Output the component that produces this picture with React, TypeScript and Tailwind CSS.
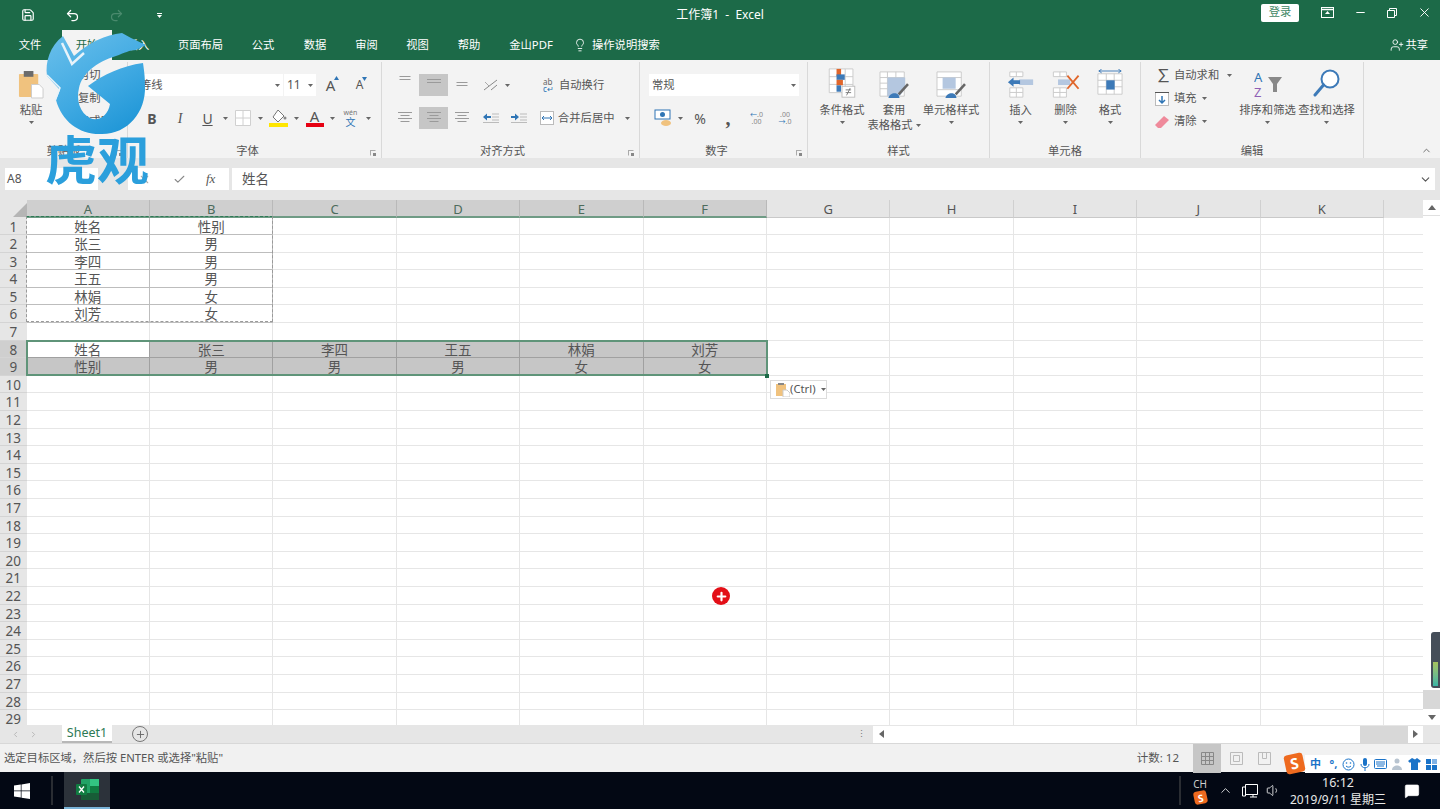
import type { ReactNode } from "react";
import {
  Save, Undo2, Redo2, Minus, X, Check, ChevronDown, ChevronUp, ChevronRight, ChevronLeft,
  Lightbulb, UserPlus, Plus, Volume1, MessageSquare,
} from "lucide-react";

const COLS = ["A", "B", "C", "D", "E", "F", "G", "H", "I", "J", "K"];
const NAMES = ["姓名", "张三", "李四", "王五", "林娟", "刘芳"];
const SEX = ["性别", "男", "男", "男", "女", "女"];
const ROWS = Array.from({ length: 29 }, (_, i) => i + 1);

function Caret({ className = "" }: { className?: string }) {
  return (
    <svg width="5" height="3" viewBox="0 0 5 3" className={className}>
      <path d="M0 0h5L2.500 3z" fill="#666" />
    </svg>
  );
}

function Lines({ rows }: { rows: number[] }) {
  return (
    <svg width="20" height="16" viewBox="0 0 20 16">
      {rows.map((w, i) => (
        <rect key={i} x={(20 - w) / 2} y={2 + i * 3} width={w} height="1" fill="#9a9a9a" />
      ))}
    </svg>
  );
}

function Group({ label, width, labelClass = "", children, launcher }: { label: string; width: string; labelClass?: string; children: ReactNode; launcher?: boolean }) {
  return (
    <div className={`${width} relative flex shrink-0 flex-col border-r border-[#d9d9d9]`}>
      <div className="min-h-0 flex-1">{children}</div>
      <div className={`${labelClass} h-[16px] text-center text-[11.3px] leading-[18px] text-[#555]`}>{label}</div>
      {launcher && (
        <svg width="6" height="6" viewBox="0 0 6 6" className="absolute right-[5px] bottom-[2px]">
          <path d="M0 .5h5.500M.500 0v5.500" stroke="#aaa" fill="none" />
          <rect x="3" y="3" width="3" height="3" fill="#888" />
        </svg>
      )}
    </div>
  );
}

function BigButton({ width, label, second, icon }: { width: string; label: string; second?: string; icon: ReactNode }) {
  return (
    <div className={`${width} flex shrink-0 flex-col items-center text-[11.3px] leading-[15px] text-[#555]`}>
      <div className="flex h-[37px] items-end justify-center">{icon}</div>
      <div className="mt-[3px] whitespace-nowrap">{label}</div>
      {second ? (
        <div className="whitespace-nowrap">{second}<Caret className="ml-[3px] inline" /></div>
      ) : (
        <Caret className="mt-[4px]" />
      )}
    </div>
  );
}

function PasteIcon() {
  return (
    <svg width="26" height="29" viewBox="0 0 27 30">
      <rect x="1" y="4" width="20" height="24" rx="1" fill="#f0c27e" />
      <rect x="6" y="1" width="10" height="6" fill="#6b6b6b" />
      <path d="M14 15h8l4 4v10H14z" fill="#fff" stroke="#ccc" />
    </svg>
  );
}

function FontA({ size, up }: { size: number; up: boolean }) {
  return (
    <div className="relative text-[#555]" style={{ fontSize: size, lineHeight: 1 }}>
      A
      <svg width="5" height="4" viewBox="0 0 5 4" className="absolute -top-[2px] -right-[4px]">
        <path d={up ? "M0 4h5L2.500 0z" : "M0 0h5L2.500 4z"} fill="#2f75b5" />
      </svg>
    </div>
  );
}

function Sogou({ size, text }: { size: string; text: string }) {
  return (
    <div className={`${size} flex rotate-[-12deg] items-center justify-center rounded-[3px] bg-[#ee6a1f] font-bold text-white`}>
      {text}
    </div>
  );
}

function Logo() {
  return (
    <div className="pointer-events-none absolute top-[30px] left-[44px] flex w-[106px] flex-col items-center">
      <svg width="106" height="108" viewBox="44 30 106 108">
        <defs>
          <linearGradient id="swirl" x1="0.2" y1="0" x2="0.8" y2="1">
            <stop offset="0" stopColor="#66bdea" />
            <stop offset="0.55" stopColor="#3fa9e2" />
            <stop offset="1" stopColor="#1d95d6" />
          </linearGradient>
        </defs>
        <path
          d="M63 36C50 46 45 62 47 76L60 90L56 100C62 122 80 135 102 134C128 134 146 112 145 86C145 76 144 70 143 63C122 66 104 74 88 86L110 104C108 116 98 122 90 118C80 113 76 100 79 88C82 74 96 62 116 56C124 53 130 50 136 50L146 45L131 38L122 33C105 35 90 42 74 56Z"
          fill="url(#swirl)"
        />
        <path d="M62 43L72 64L84 53" stroke="#e8f3fa" strokeWidth="2.500" fill="none" />
        <path d="M47 75L60 88L55 101" stroke="#e8f3fa" strokeWidth="1.500" fill="none" />
      </svg>
      <div className="-mt-[4px] text-[52px] leading-[52px] font-bold whitespace-nowrap text-[#2b9fdc]">虎观</div>
    </div>
  );
}

function Ribbon() {
  return (
    <div className="flex h-[98px] bg-[#f3f3f3] pt-[2px]">
      <Group label="剪贴板" width="w-[128px]" launcher>
        <div className="flex">
          <BigButton width="w-[62px]" label="粘贴" icon={<PasteIcon />} />
          <div className="ml-[16px] flex flex-col gap-[7px] pt-[5px] text-[11.3px] leading-[16px] text-[#555]">
            <span>剪切</span>
            <span>复制</span>
            <span>格式刷</span>
          </div>
        </div>
      </Group>

      <Group label="字体" labelClass="pr-[14px]" width="w-[254px]" launcher>
        <div className="flex h-[44px] items-center pt-[2px] pl-[2px]">
          <div className="flex h-[22px] w-[153px] items-center justify-between bg-white pr-[3px] pl-[10px] text-[11.3px] text-[#555]">
            等线<Caret />
          </div>
          <div className="ml-[1px] flex h-[22px] w-[32px] items-center justify-between bg-white px-[3px] text-[12px] text-[#555]">
            11<Caret />
          </div>
          <div className="flex w-[29px] justify-center"><FontA size={15} up /></div>
          <div className="flex w-[29px] justify-center"><FontA size={12} up={false} /></div>
        </div>
        <div className="mt-[1px] flex h-[22px] items-center pl-[10px] text-[14px] text-[#555]">
          <div className="w-[28px] text-center font-bold">B</div>
          <div className="w-[28px] text-center font-['Liberation_Serif',serif] italic">I</div>
          <div className="w-[27px] text-center underline">U</div>
          <div className="flex w-[8px] justify-center"><Caret /></div>
          <div className="flex w-[28px] justify-center">
            <svg width="16" height="16" viewBox="0 0 16 16"><path d="M.5.500h15v15H.5zM8 0v16M0 8h16" stroke="#d0d0d0" fill="#fff" /></svg>
          </div>
          <div className="flex w-[7px] justify-center"><Caret /></div>
          <div className="flex w-[29px] justify-center">
            <svg width="19" height="18" viewBox="0 0 19 18">
              <path d="M9 1l6 6-6 6-5-5z" fill="#fff" stroke="#777" />
              <circle cx="16" cy="9" r="1.500" fill="#888" />
              <rect y="14" width="19" height="4" fill="#ffe600" />
            </svg>
          </div>
          <div className="flex w-[7px] justify-center"><Caret /></div>
          <div className="flex w-[29px] flex-col items-center leading-[13px]">
            <span className="text-[15px]">A</span>
            <span className="h-[4px] w-[18px] bg-[#e60012]" />
          </div>
          <div className="flex w-[7px] justify-center"><Caret /></div>
          <div className="flex w-[29px] flex-col items-center text-[7px] leading-[8px] text-[#777]">
            <span>wén</span>
            <span className="text-[10px] leading-[10px] text-[#2f75b5]">文</span>
          </div>
          <div className="flex w-[7px] justify-center"><Caret /></div>
        </div>
      </Group>

      <Group label="对齐方式" labelClass="pr-[16px]" width="w-[258px]" launcher>
        <div className="flex h-[44px] items-center pt-[2px] pl-[9px] text-[11.3px] text-[#555]">
          <div className="flex h-[22px] w-[28px] items-start justify-center"><Lines rows={[11, 11]} /></div>
          <div className="flex h-[22px] w-[29px] items-center justify-center bg-[#c6c6c6]"><Lines rows={[14, 14]} /></div>
          <div className="flex h-[22px] w-[28px] items-end justify-center"><Lines rows={[11, 11]} /></div>
          <div className="flex w-[29px] justify-center">
            <svg width="15" height="14" viewBox="0 0 15 14"><path d="M1 12L14 2M8 12l6-5" stroke="#888" fill="none" /><path d="M2 4l4 4" stroke="#aaa" /></svg>
          </div>
          <Caret />
          <div className="ml-[33px] flex items-center gap-[2px]">
            <div className="w-[14px] text-[8px] leading-[7px] text-[#666]">ab<br /><span className="text-[#2f75b5]">c↵</span></div>
            <span>自动换行</span>
          </div>
        </div>
        <div className="mt-[1px] flex h-[22px] items-center pl-[9px] text-[11.3px] text-[#555]">
          <div className="flex w-[28px] justify-center"><Lines rows={[14, 9, 14, 9]} /></div>
          <div className="flex h-[22px] w-[29px] items-center justify-center bg-[#c6c6c6]"><Lines rows={[14, 9, 14, 9]} /></div>
          <div className="flex w-[28px] justify-center"><Lines rows={[14, 9, 14, 9]} /></div>
          <div className="flex w-[29px] justify-center">
            <svg width="16" height="12" viewBox="0 0 16 12"><path d="M9 2h7M9 5h7M9 8h7M0 10.500h16" stroke="#bbb" /><path d="M0 5l4-3.500V4h4v2H4v2.500z" fill="#2f75b5" /></svg>
          </div>
          <div className="flex w-[28px] justify-center">
            <svg width="16" height="12" viewBox="0 0 16 12"><path d="M9 2h7M9 5h7M9 8h7M0 10.500h16" stroke="#bbb" /><path d="M8 5L4 1.500V4H0v2h4v2.500z" fill="#2f75b5" /></svg>
          </div>
          <div className="ml-[7px] flex items-center gap-[4px]">
            <svg width="14" height="14" viewBox="0 0 14 14"><rect x=".5" y=".5" width="13" height="13" fill="#fff" stroke="#bbb" /><path d="M2 7h10M2 7l2-2M2 7l2 2M12 7l-2-2M12 7l-2 2" stroke="#2f75b5" fill="none" /></svg>
            <span>合并后居中</span>
            <Caret className="ml-[6px]" />
          </div>
        </div>
      </Group>

      <Group label="数字" labelClass="pr-[14px]" width="w-[168px]" launcher>
        <div className="flex h-[44px] items-center pt-[2px] pl-[9px]">
          <div className="flex h-[22px] w-[150px] items-center justify-between bg-white pr-[3px] pl-[3px] text-[11.3px] text-[#555]">
            常规<Caret />
          </div>
        </div>
        <div className="mt-[1px] flex h-[22px] items-center pl-[9px] text-[#555]">
          <div className="flex w-[28px] justify-center">
            <svg width="18" height="18" viewBox="0 0 18 18">
              <rect x="1" y="1" width="15" height="9" fill="#fff" stroke="#2f75b5" />
              <circle cx="8.500" cy="5.500" r="2.500" fill="#2f75b5" />
              <ellipse cx="12" cy="14" rx="5" ry="3" fill="#f0c27e" />
            </svg>
          </div>
          <div className="flex w-[6px] justify-center"><Caret /></div>
          <div className="w-[33px] pl-[1px] text-center text-[14px]">%</div>
          <div className="w-[24px] text-center font-['Liberation_Serif',serif] text-[20px] leading-[14px] font-bold">,</div>
          <div className="flex w-[33px] flex-col items-center text-[7px] leading-[7px] text-[#888]">
            <span><span className="text-[#2f75b5]">←</span>.0</span><span>.00</span>
          </div>
          <div className="flex w-[24px] flex-col items-center text-[7px] leading-[7px] text-[#888]">
            <span>.00</span><span><span className="text-[#2f75b5]">→</span>.0</span>
          </div>
        </div>
      </Group>

      <Group label="样式" width="w-[182px]">
        <div className="flex pl-[7px]">
          <BigButton width="w-[54px]" label="条件格式" icon={
            <svg width="28" height="31" viewBox="0 0 30 34">
              <path d="M1 1h26v26H1zM1 9.500h26M1 18h26M18.500 1v26" stroke="#c9c9c9" fill="#fff" />
              <rect x="9" y="1" width="5" height="8" fill="#e0662b" /><rect x="9" y="7" width="9" height="6" fill="#3d7ab8" />
              <rect x="9" y="13" width="7" height="6" fill="#e0662b" /><rect x="9" y="19" width="5" height="7" fill="#3d7ab8" />
              <rect x="15" y="20" width="14" height="12" fill="#fff" stroke="#bbb" />
              <path d="M19 24h6M19 27h6M24 22l-4 8" stroke="#777" />
            </svg>
          } />
          <BigButton width="w-[50px]" label="套用" second="表格格式" icon={
            <svg width="30" height="28" viewBox="0 0 32 30">
              <path d="M1 1h26v26H1zM1 7h26M1 13h26M1 19h26M9 1v26M18 1v26" stroke="#c9c9c9" fill="#fff" />
              <path d="M9 7h19v12l-6 8H9z" fill="#b4c7e0" /><path d="M20 24l10-11 2 2-10 11z" fill="#666" />
              <path d="M10 29c1-5 8-7 11-3l1 3z" fill="#3d7ab8" />
            </svg>
          } />
          <BigButton width="w-[64px]" label="单元格样式" icon={
            <svg width="30" height="28" viewBox="0 0 32 30">
              <path d="M1 1h26v26H1zM1 7h26M1 20h26" stroke="#c9c9c9" fill="#fff" />
              <rect x="7" y="7" width="14" height="12" fill="#b4c7e0" /><path d="M20 24l10-11 2 2-10 11z" fill="#666" />
              <path d="M10 29c1-5 8-7 11-3l1 3z" fill="#3d7ab8" />
            </svg>
          } />
        </div>
      </Group>

      <Group label="单元格" width="w-[151px]">
        <div className="flex pl-[8px]">
          <BigButton width="w-[45px]" label="插入" icon={
            <svg width="28" height="28" viewBox="0 0 28 30">
              <path d="M2 1h14v5H2zM9 1v5M2 18h14v10H2zM2 23h14M9 18v10" stroke="#c9c9c9" fill="#fff" />
              <rect x="12" y="9" width="15" height="6" fill="#b4c7e0" /><path d="M0 12l6-5v3h7v4H6v3z" fill="#3d7ab8" />
            </svg>
          } />
          <BigButton width="w-[45px]" label="删除" icon={
            <svg width="29" height="28" viewBox="0 0 30 30">
              <path d="M2 1h14v5H2zM9 1v5M2 18h14v10H2zM2 23h14M9 18v10" stroke="#c9c9c9" fill="#fff" />
              <rect x="7" y="9" width="13" height="6" fill="#b4c7e0" /><path d="M17 5l12 14M29 5L17 19" stroke="#e0662b" strokeWidth="2" />
            </svg>
          } />
          <BigButton width="w-[44px]" label="格式" icon={
            <svg width="26" height="30" viewBox="0 0 28 32">
              <path d="M1 5h26v22H1zM1 12h26M1 19h26M10 5v22M18.500 5v22" stroke="#c9c9c9" fill="#fff" />
              <path d="M2 2h24M2 2l3-2M2 2l3 2M26 2l-3-2M26 2l-3 2" stroke="#3d7ab8" fill="none" />
              <rect x="10" y="12" width="9" height="10" fill="#3d7ab8" />
            </svg>
          } />
        </div>
      </Group>

      <Group label="编辑" width="w-[223px]">
        <div className="flex pl-[14px]">
          <div className="flex w-[83px] flex-col pt-[2px] text-[11.3px] text-[#555]">
            <div className="flex h-[23px] items-center gap-[5px]">
              <span className="w-[14px] text-center text-[17px] leading-none">∑</span>自动求和<Caret className="ml-[3px]" />
            </div>
            <div className="flex h-[23px] items-center gap-[5px]">
              <svg width="14" height="14" viewBox="0 0 14 14"><rect x=".5" y=".5" width="13" height="13" fill="#fff" stroke="#bbb" /><path d="M0 .5h14" stroke="#555" /><path d="M7 4v7M4 8l3 3 3-3" stroke="#2f75b5" strokeWidth="1.500" fill="none" /></svg>
              填充<Caret />
            </div>
            <div className="flex h-[23px] items-center gap-[5px]">
              <svg width="14" height="12" viewBox="0 0 14 12"><path d="M9 0l5 4-8 8H3L0 9z" fill="#ef8a9b" /></svg>
              清除<Caret />
            </div>
          </div>
          <BigButton width="w-[59px]" label="排序和筛选" icon={
            <svg width="28" height="30" viewBox="0 0 28 30">
              <text x="0" y="13" fontSize="13" fill="#2f75b5">A</text>
              <text x="0" y="28" fontSize="13" fill="#8e5fb5">Z</text>
              <path d="M14 8h14l-5 7v8h-4v-8z" fill="#888" />
            </svg>
          } />
          <BigButton width="w-[59px]" label="查找和选择" icon={
            <svg width="28" height="30" viewBox="0 0 28 30">
              <circle cx="17" cy="10" r="8.500" fill="#fff" stroke="#3d7ab8" strokeWidth="2" />
              <path d="M10.500 16L2 26" stroke="#3d7ab8" strokeWidth="3" strokeLinecap="round" />
            </svg>
          } />
        </div>
      </Group>
      <div className="flex flex-1 items-end justify-end pr-[8px] pb-[2px]"><ChevronUp size={11} color="#666" /></div>
    </div>
  );
}

function Sheet() {
  return (
    <div className="flex h-[525px] bg-white">
      <div className="relative w-[1423px] overflow-hidden">
        <div className="grid auto-rows-[17.6px] grid-cols-[26.6px_repeat(11,123.4px)_1fr] grid-rows-[17.5px] text-[13.5px] leading-[19px] text-[#555]">
          <div className="relative bg-[#e6e6e6]">
            <svg width="14" height="14" viewBox="0 0 14 14" className="absolute right-0 bottom-[1px]"><path d="M14 0v14H0z" fill="#b5b5b5" /></svg>
          </div>
          {COLS.map((c, i) => (
            <div key={c} className={i < 6
              ? "border-r border-b-2 border-r-[#b9b9b9] border-b-[#6f9b85] bg-[#cfcfcf] text-center text-[13px] leading-[18px] text-[#4d6b5c]"
              : "border-r border-b border-r-[#d0d0d0] border-b-[#c9c9c9] bg-[#e6e6e6] text-center text-[13px] leading-[18px] text-[#555]"}>{c}</div>
          ))}
          <div className="bg-[#e6e6e6]" />
          {ROWS.map((r) => {
            const top = r <= 6;
            const sel = r === 8 || r === 9;
            return (
              <div key={r} className="contents">
                <div className={`${sel ? "bg-[#cfcfcf]" : "bg-[#e6e6e6]"} border-b border-[#d4d4d4] text-center text-[13.5px] text-[#555]`}>{r}</div>
                {COLS.map((c, i) => {
                  let text = "";
                  if (top && i === 0) text = NAMES[r - 1];
                  if (top && i === 1) text = SEX[r - 1];
                  if (r === 8 && i < 6) text = NAMES[i];
                  if (r === 9 && i < 6) text = SEX[i];
                  const filled = sel && i < 6 && !(r === 8 && i === 0);
                  let line = "border-[#e6e6e6]";
                  if (top && i < 2) line = "border-[#bdbdbd]";
                  if (sel && i < 6) line = "border-[#a0a0a0]";
                  return (
                    <div key={c} className={`${filled ? "bg-[#c6c6c6]" : "bg-white"} ${line} overflow-hidden border-r border-b text-center`}>
                      {text}
                    </div>
                  );
                })}
                <div className="border-b border-[#e6e6e6]" />
              </div>
            );
          })}
        </div>
        {/* copy range, paste range, paste options, cursor */}
        <div className="pointer-events-none absolute top-[16px] left-[26px] h-[106px] w-[247px] border border-dashed border-[#9a9a9a] border-t-[#2d7a55]" />
        <div className="pointer-events-none absolute top-[140px] left-[26px] h-[36px] w-[742px] border-2 border-[#5f9479]" />
        <div className="absolute top-[174px] left-[765px] h-[4px] w-[4px] bg-[#1b6a47]" />
        <div className="absolute top-[180px] left-[770px] flex h-[19px] w-[57px] items-center border border-[#dcdcdc] bg-white pl-[5px] text-[11.300px] text-[#555]">
          <svg width="14" height="14" viewBox="0 0 14 14"><rect x="0" y="1" width="10" height="12" fill="#f0c27e" /><rect x="2" y="0" width="6" height="2" fill="#888" /><path d="M7 7h4l3 3v4H7z" fill="#fff" stroke="#ccc" /></svg>
          (Ctrl)<Caret className="ml-[5px]" />
        </div>
        <div className="absolute top-[387px] left-[712px] flex h-[18px] w-[18px] items-center justify-center rounded-full bg-[#e30f17]">
          <Plus size={13} strokeWidth={4} color="#fff" />
        </div>
      </div>
      <div className="relative flex w-[17px] flex-col bg-white">
        <div className="flex h-[16px] items-center justify-center border-b border-[#e0e0e0]">
          <svg width="8" height="5" viewBox="0 0 8 5"><path d="M0 5h8L4 0z" fill="#666" /></svg>
        </div>
        <div className="flex-1" />
        <div className="h-[19px] bg-[#d8d8d8]" />
        <div className="flex h-[16px] items-center justify-center">
          <svg width="8" height="5" viewBox="0 0 8 5"><path d="M0 0h8L4 5z" fill="#666" /></svg>
        </div>
        <div className="absolute top-[432px] left-[8px] flex h-[56px] w-[9px] flex-col justify-end rounded-l-[3px] bg-[#454e59] p-[2px]">
          <div className="h-[24px] w-[5px] bg-gradient-to-b from-[#a5c25c] to-[#35b5a5]" />
        </div>
      </div>
    </div>
  );
}

export default function App() {
  return (
    <div className="relative flex h-[809px] w-[1440px] flex-col overflow-hidden bg-[#e6e6e6] font-['Noto_Sans','Noto_Sans_CJK_SC',sans-serif]">
      {/* title bar */}
      <div className="grid h-[30px] grid-cols-[1fr_auto_1fr] items-center bg-[#1c6a48] text-white">
        <div className="flex items-center">
          <div className="flex w-[56px] justify-center"><Save size={14} /></div>
          <div className="flex w-[32px] justify-center"><Undo2 size={15} /></div>
          <div className="ml-[12px] flex w-[32px] justify-center"><Redo2 size={15} color="#4a8a6d" /></div>
          <div className="ml-[11px] flex w-[32px] flex-col items-center gap-[1px]">
            <span className="h-px w-[5px] bg-white" />
            <svg width="5" height="3" viewBox="0 0 5 3"><path d="M0 0h5L2.500 3z" fill="#fff" /></svg>
          </div>
        </div>
        <div className="mb-[1px] text-[12px] whitespace-pre">工作簿1  -  Excel</div>
        <div className="mb-[5px] flex items-center justify-end">
          <div className="mr-[12px] flex h-[18px] w-[38px] items-center justify-center rounded-[2px] bg-white text-[11.3px] text-[#3f8865]">登录</div>
          <div className="flex w-[33px] justify-center">
            <svg width="13" height="11" viewBox="0 0 13 11"><rect x=".5" y=".5" width="12" height="10" fill="none" stroke="#fff" /><path d="M.5 2.500h12" stroke="#fff" strokeWidth="1.500" /><path d="M4 7l2.500-3L9 7z" fill="#fff" /></svg>
          </div>
          <div className="flex w-[32px] justify-center"><Minus size={13} /></div>
          <div className="flex w-[32px] justify-center">
            <svg width="10" height="10" viewBox="0 0 10 10"><path d="M.5 2.500h7v7h-7zM2.500 2.500V.5h7v7h-2" fill="none" stroke="#fff" /></svg>
          </div>
          <div className="flex w-[32px] justify-center"><X size={15} strokeWidth={1.500} /></div>
        </div>
      </div>

      {/* ribbon tabs */}
      <div className="flex h-[30px] items-center bg-[#1c6a48] text-[11.300px] text-white">
        <div className="w-[60px] text-center">文件</div>
        <div className="ml-[2px] flex h-[30px] w-[50px] items-center justify-center bg-[#f3f3f3] text-[#1c6a48]">开始</div>
        <div className="w-[52px] text-center">插入</div>
        <div className="w-[73px] text-center">页面布局</div>
        <div className="w-[52px] text-center">公式</div>
        <div className="w-[52px] text-center">数据</div>
        <div className="w-[51px] text-center">审阅</div>
        <div className="w-[51px] text-center">视图</div>
        <div className="w-[52px] text-center">帮助</div>
        <div className="w-[72px] text-center">金山PDF</div>
        <div className="ml-[6px] flex items-center gap-[5px]">
          <Lightbulb size={14} strokeWidth={1.500} />
          <span>操作说明搜索</span>
        </div>
        <div className="ml-auto flex items-center gap-[1px] pr-[12px]">
          <UserPlus size={14} strokeWidth={1.500} />
          <span>共享</span>
        </div>
      </div>

      <Ribbon />

      {/* formula bar */}
      <div className="flex h-[42px] items-start bg-[#e6e6e6] pt-[10px] text-[#555]">
        <div className="ml-[5px] flex h-[22px] w-[93px] items-center bg-white pl-[2px] text-[12px]">A8</div>
        <div className="ml-[30px] flex h-[22px] w-[101px] items-center bg-white pl-[10px]">
          <X size={13} color="#aaa" />
          <Check size={13} color="#888" className="ml-[22px]" />
          <span className="ml-[20px] font-['Liberation_Serif',serif] text-[13px] italic">fx</span>
        </div>
        <div className="ml-[3px] flex h-[22px] flex-1 items-center justify-between bg-white pl-[10px] text-[13.5px]">
          姓名
        </div>
        <div className="mr-[5px] flex h-[22px] w-[10px] items-center bg-white"><ChevronDown size={13} className="-ml-[6px]" /></div>
      </div>

      <Sheet />

      {/* sheet tabs and horizontal scrollbar */}
      <div className="flex h-[18px] items-center bg-[#e6e6e6] text-[#aaa]">
        <ChevronLeft size={9} className="ml-[11px]" />
        <ChevronRight size={9} className="ml-[9px]" />
        <div className="ml-[24px] flex h-[18px] w-[50px] items-center justify-center border-b-2 border-[#b8b8b8] bg-white text-[12.500px] text-[#2d7a55]">Sheet1</div>
        <div className="ml-[20px] flex h-[16px] w-[16px] items-center justify-center rounded-full border border-[#777] text-[#666]"><Plus size={11} /></div>
        <div className="ml-[709px] text-[9px] leading-[18px] text-[#777]">⋮</div>
        <div className="ml-[7px] flex h-[17px] w-[16px] items-center justify-center bg-white"><svg width="5" height="8" viewBox="0 0 5 8"><path d="M5 0v8L0 4z" fill="#666" /></svg></div>
        <div className="h-[17px] w-[471px] bg-white" />
        <div className="h-[17px] w-[48px] bg-[#d8d8d8]" />
        <div className="flex h-[17px] w-[15px] items-center justify-center bg-white"><svg width="5" height="8" viewBox="0 0 5 8"><path d="M0 0v8l5-4z" fill="#666" /></svg></div>
      </div>

      {/* status bar */}
      <div className="relative flex h-[29px] items-center border-t border-[#d8d8d8] bg-[#f1f1f1] pl-[4px] text-[11.300px] text-[#555]">
        <span>选定目标区域，然后按 ENTER 或选择"粘贴"</span>
        <span className="ml-auto text-[11.500px]">计数: 12</span>
        <div className="mr-[219px] ml-[14px] flex h-[29px] w-[28px] items-center justify-center bg-[#c6c6c6]">
          <svg width="13" height="13" viewBox="0 0 13 13"><path d="M.5.500h12v12H.5zM4.500.500v12M8.500.500v12M.5 4.500h12M.5 8.500h12" stroke="#888" fill="none" /></svg>
        </div>
        <svg width="13" height="13" viewBox="0 0 13 13" className="absolute left-[1230px]"><path d="M.5.500h12v12H.5zM3.500 3.500h6v6h-6z" stroke="#bbb" fill="none" /></svg>
        <svg width="13" height="13" viewBox="0 0 13 13" className="absolute left-[1258px]"><path d="M.5.500h12v12H.5zM4.500.500v6h4v-6" stroke="#bbb" fill="none" /></svg>
        {/* sogou input bar */}
        <div className="absolute top-[11px] left-[1305px] flex h-[18px] w-[135px] items-center justify-between bg-white pr-[3px] pl-[5px] text-[11px] font-bold text-[#1a73c8]">
          <span>中</span>
          <span className="ml-[4px]">°,</span>
          <svg width="13" height="13" viewBox="0 0 13 13"><circle cx="6.500" cy="6.500" r="5.500" fill="none" stroke="#1a73c8" /><circle cx="4.500" cy="5" r=".8" fill="#1a73c8" /><circle cx="8.500" cy="5" r=".8" fill="#1a73c8" /><path d="M4 8c1.500 1.500 3.500 1.500 5 0" stroke="#1a73c8" fill="none" /></svg>
          <svg width="10" height="13" viewBox="0 0 10 13"><rect x="3" y="0" width="4" height="8" rx="2" fill="#1a73c8" /><path d="M1 6c0 5 8 5 8 0M5 10v3" stroke="#1a73c8" fill="none" /></svg>
          <svg width="13" height="10" viewBox="0 0 13 10"><rect x=".5" y=".5" width="12" height="9" rx="1" fill="none" stroke="#1a73c8" /><path d="M2 3h9M2 5h9M3 7h7" stroke="#1a73c8" /></svg>
          <svg width="12" height="12" viewBox="0 0 12 12"><circle cx="5" cy="3" r="2.500" fill="#b8c4d0" /><path d="M0 12c0-6 10-6 10 0z" fill="#b8c4d0" /></svg>
          <svg width="13" height="12" viewBox="0 0 13 12"><path d="M4 0L0 3l2 2 1-1v8h7V4l1 1 2-2-4-3-2 1.500z" fill="#1a73c8" /></svg>
          <svg width="11" height="11" viewBox="0 0 11 11"><rect width="5" height="5" fill="#1a73c8" /><rect x="6" width="5" height="5" fill="#7fb2e5" /><rect y="6" width="5" height="5" fill="#1a73c8" /><rect x="6" y="6" width="5" height="5" fill="#1a73c8" /></svg>
        </div>
        <div className="absolute top-[10px] left-[1285px]">
          <Sogou size="h-[19px] w-[19px] text-[15px] leading-none" text="S" />
        </div>
      </div>

      {/* taskbar */}
      <div className="flex h-[37px] flex-1 items-center bg-[#030814] text-white">
        <div className="flex w-[44px] justify-center">
          <svg width="16" height="16" viewBox="0 0 16 16"><path d="M0 2.500l6.800-1v6H0zM7.500 1.400L16 0v7.500H7.500zM0 8.300h6.800v6.100L0 13.400zM7.500 8.300H16V16l-8.500-1.300z" fill="#fff" /></svg>
        </div>
        <div className="ml-[7px] h-[29px] w-[2px] bg-[#2a2d33]" />
        <div className="ml-[11px] flex h-[37px] w-[46px] items-center justify-center border-b-2 border-[#7ab4d8] bg-[#2c323a]">
          <svg width="23" height="21" viewBox="0 0 23 21">
            <rect x="5" y="0" width="18" height="21" rx="1" fill="#21a366" /><rect x="14" y="0" width="9" height="7" fill="#33c481" />
            <rect x="14" y="7" width="9" height="7" fill="#107c41" /><rect x="5" y="14" width="18" height="7" fill="#185c37" />
            <rect x="0" y="5" width="11" height="11" rx="1" fill="#107c41" />
            <path d="M3 7.500l5 6M8 7.500l-5 6" stroke="#fff" strokeWidth="1.300" />
          </svg>
        </div>
        <div className="ml-[1069px] h-[29px] w-[2px] bg-[#2a2d33]" />
        <div className="ml-[10px] flex w-[18px] flex-col items-center text-[10px] leading-[14px] text-[#cfcfcf]">
          CH
          <Sogou size="h-[13px] w-[13px] text-[10px] leading-none" text="S" />
        </div>
        <div className="ml-[8px] flex w-[16px] justify-center"><ChevronUp size={15} strokeWidth={1.300} /></div>
        <div className="ml-[6px] flex w-[22px] justify-center">
          <svg width="16" height="14" viewBox="0 0 16 14"><path d="M3.500.500h12v10h-12zM8 13h7M11 11v2M.5 3h3v9h-3z" stroke="#fff" fill="none" /></svg>
        </div>
        <div className="ml-[2px] flex w-[20px] justify-center"><Volume1 size={15} strokeWidth={1.300} /></div>
        <div className="ml-[6px] flex w-[98px] flex-col items-center text-[12px] leading-[17px] whitespace-nowrap text-[#e8e8e8]">
          <span className="text-[12.500px]">16:12</span>
          <span>2019/9/11 星期三</span>
        </div>
        <div className="ml-[15px] flex w-[20px] justify-center"><MessageSquare size={16} fill="#fff" strokeWidth={1} /></div>
      </div>

      <Logo />
    </div>
  );
}
